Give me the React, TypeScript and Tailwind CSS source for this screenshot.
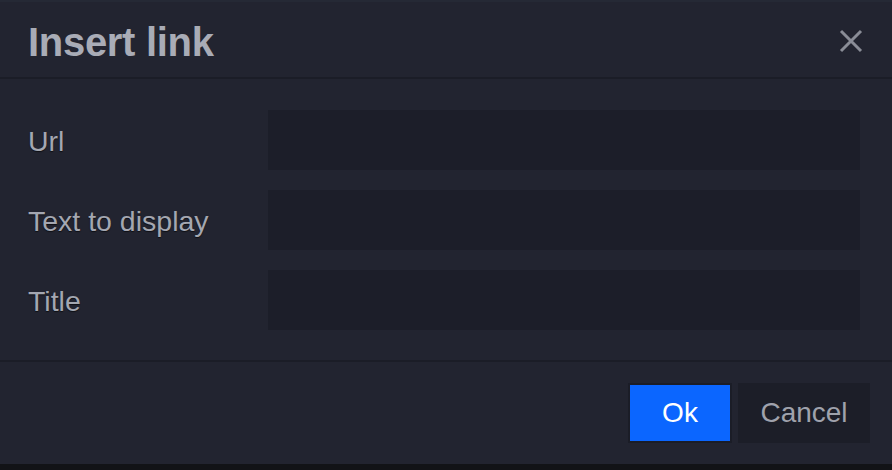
const fields = ["Url", "Text to display", "Title"];

export default function App() {
  return (
    <div
      className="w-[892px] h-[470px] flex flex-col bg-[#121317] text-[#a6a9b3]"
      style={{ fontFamily: '"Liberation Sans", Arial, sans-serif' }}
    >
      <div className="flex flex-col bg-[#222430] border-t-2 border-[#252935]">
        <div className="h-[77px] flex items-center justify-between pl-[28px] pr-[29px] border-b-2 border-[#1b1d27]">
          <h1 className="text-[40px] font-bold text-[#a9acb6] leading-none tracking-[-0.3px] mt-[4px]">
            Insert link
          </h1>
          <svg width="24" height="24" viewBox="0 0 24 24" className="mt-[2px]">
            <path
              d="M2 2 L22 22 M22 2 L2 22"
              stroke="#8a8d97"
              strokeWidth="3"
              strokeLinecap="butt"
            />
          </svg>
        </div>
        <div className="flex flex-col gap-[20px] pt-[31px] pb-[30px] pl-[28px] pr-[32px] border-b-2 border-[#1b1d27]">
          {fields.map((f) => (
            <div key={f} className="flex items-center">
              <label className="w-[240px] text-[28.5px] leading-none text-[#a4a7b1] mt-[2px] [text-shadow:0_1px_1px_rgba(0,0,0,0.6)]">
                {f}
              </label>
              <div className="flex-1 h-[60px] bg-[#1c1e29]" />
            </div>
          ))}
        </div>
        <div className="h-[102px] flex items-center justify-end gap-[6px] pr-[22px]">
          <button className="w-[104px] h-[60px] border-2 border-[#1b1d27] bg-[#0b66ff] text-white text-[28px] leading-none">
            Ok
          </button>
          <button className="w-[132px] h-[60px] bg-[#1c1e28] text-[#9fa2ac] text-[28px] leading-none">
            Cancel
          </button>
        </div>
      </div>
    </div>
  );
}
